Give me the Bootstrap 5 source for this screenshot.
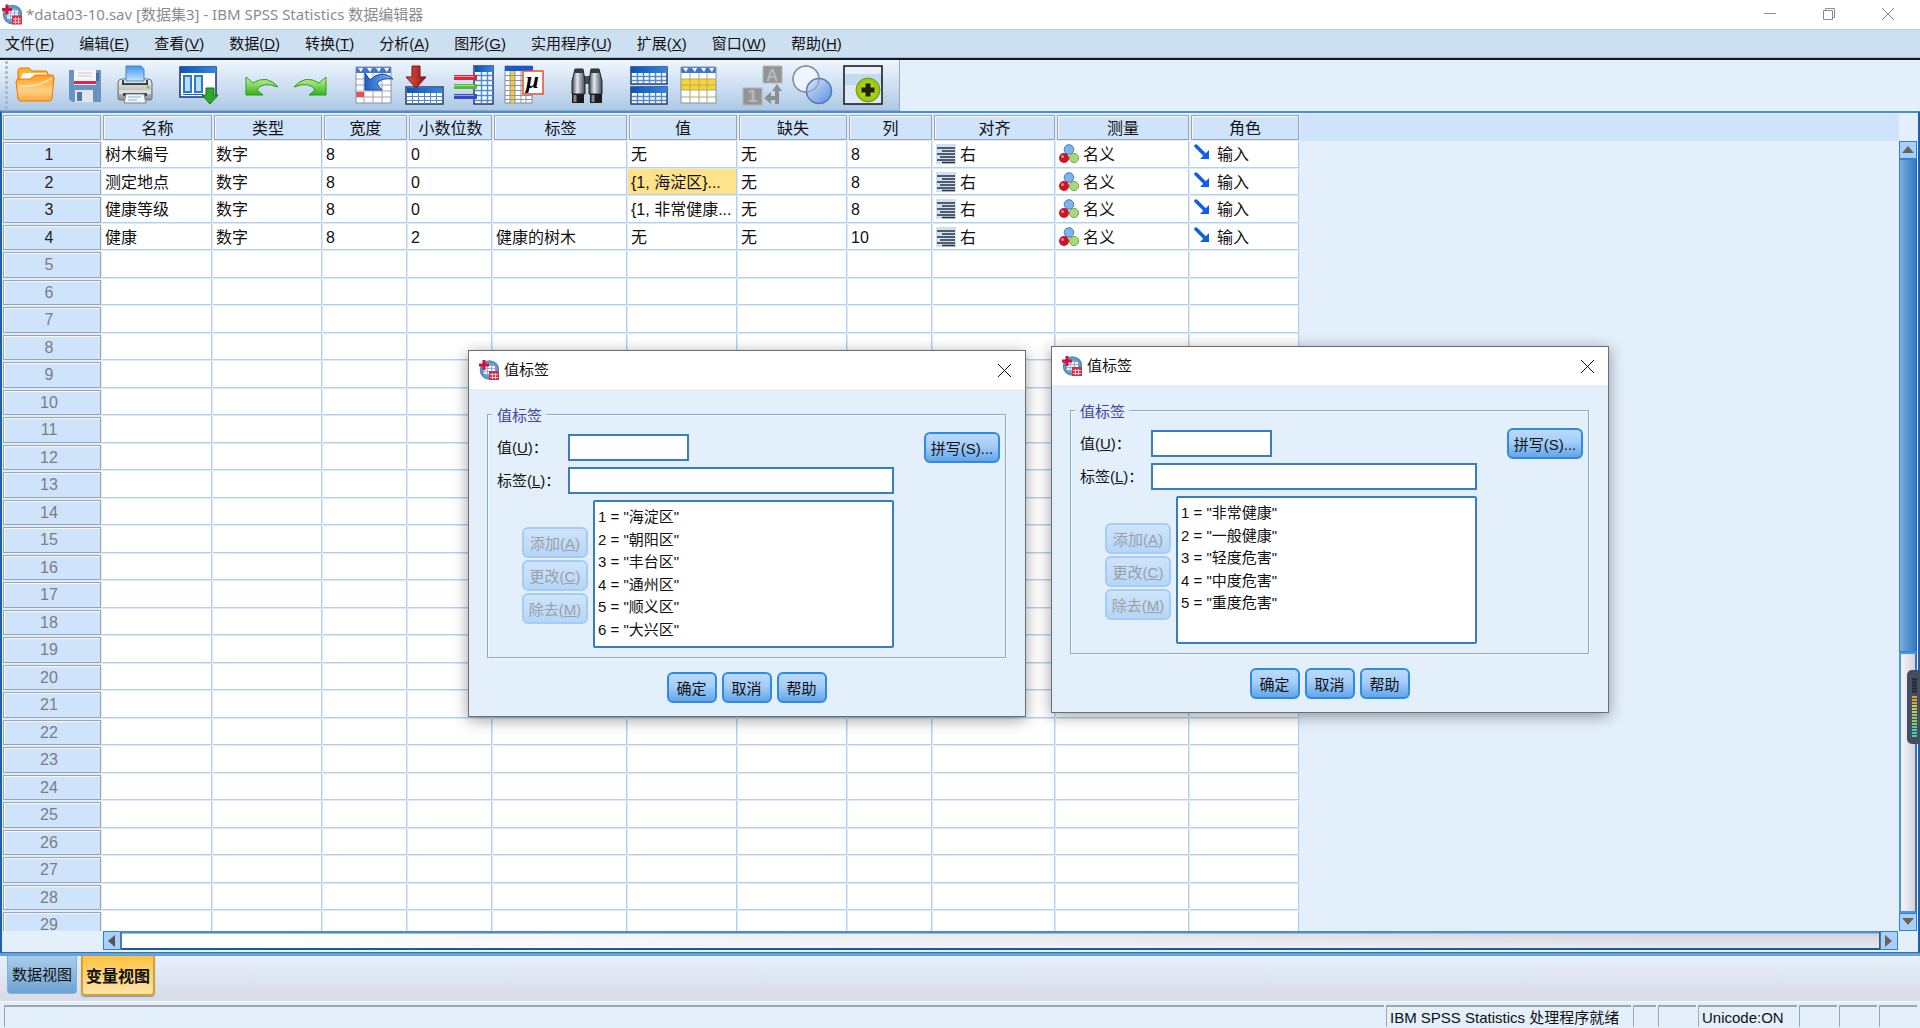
<!DOCTYPE html>
<html lang="zh-CN">
<head>
<meta charset="utf-8">
<meta name="viewport" content="width=device-width, initial-scale=1">
<title>*data03-10.sav [数据集3] - IBM SPSS Statistics 数据编辑器</title>
<link href="https://cdn.jsdelivr.net/npm/bootstrap@5.3.0/dist/css/bootstrap.min.css" rel="stylesheet">
<style>
:root { --pane:#e3effb; --head:#cfe3fb; --line:#b3d0ee; --line-soft:#dce9f7; }
body { font:16px/22px "Liberation Sans","Noto Sans CJK SC",sans-serif; color:#111; background:var(--pane); }
.title-bar { height:29px; background:#fff; color:#8c8c8c; font:15px/22px "Noto Sans","Noto Sans CJK SC",sans-serif; padding:0 3px 1px 2px; }
.win-btn { width:59px; height:29px; border:0; background:none; color:#8c8c8c; padding:0; display:flex; align-items:center; justify-content:center; }
.menu-bar { height:31px; background:#cde0f1; border-top:1px solid #b3cde3; border-bottom:2px solid #15181c; gap:25px; padding-left:5px; font-size:15px; box-shadow:inset 0 -1px #a9bdd0; }
.menu-bar a, .menu-bar a:hover { color:#111; text-decoration:none; }
.tool-wrap { height:51px; }
.tool-bar { width:900px; gap:10px; background:linear-gradient(#eef6fe,#cfe0f2 50%,#adc9e5); border-right:1px solid #9aa9b8; border-bottom:1px solid #9aa5b1; padding-left:4px; }
.grip { width:5px; height:50px; margin-right:-4px; background:radial-gradient(circle,#aab4bf 1px,transparent 2px) 0 0/5px 5px; }
.tool-bar button { width:40px; height:40px; padding:0; border:0; background:none; display:block; flex:none; }
.tool-bar svg { display:block; overflow:visible; }
.tool-bar .gap-before { margin-left:13px; }
.data-pane { border-top:2px solid #4a8fd6; border-left:2px solid #1a5fb0; border-right:2px solid #1a5fb0; border-bottom:1px solid #2a72ba; min-height:0; padding-top:1px; }
.grid-row { min-height:0; }
.grid-view { overflow:hidden; min-width:0; min-height:0; background:linear-gradient(var(--head),var(--head)) 0 0/100% 27px no-repeat; }
.var-grid { table-layout:fixed; width:1298px; border-collapse:separate; border-spacing:0; background:#fff; }
.var-grid th { font-weight:400; text-align:center; background:var(--head); padding:0; line-height:22px; border:1px solid #e2ecf7; box-shadow:inset 0 0 0 1px #98a3b3, inset 2px 2px #f4f9ff; }
.var-grid thead th { height:27px; padding-top:2px; }
.var-grid tbody th { color:#7a7d82; padding-right:6px; }
.var-grid tbody tr.used th { color:#222; }
.var-grid tbody tr { height:27px; }
.var-grid tbody tr:nth-child(odd) { height:28px; }
.var-grid td { padding:1px 0 0 3px; line-height:22px; white-space:nowrap; overflow:hidden; border-right:1px solid var(--line-soft); border-bottom:1px solid var(--line-soft); box-shadow:inset -1px -1px var(--line); }
.var-grid td.picked { background:#fee38b; }
.var-grid td svg { vertical-align:-4px; margin-right:4px; }
.v-bar { width:19px; padding-top:27px; }
.arrow { flex:none; border:1px solid #2a7fd8; background:#a9d0fb; padding:0; display:flex; align-items:center; justify-content:center; }
.v-bar .arrow { height:18px; width:18px; }
.v-thumb { height:493px; width:18px; border:1px solid #2f86dc; border-right-color:#1b63ae; background:linear-gradient(90deg,#78b0de,#2f78c4); }
.v-track { width:18px; border:2px solid #4c96dd; border-right-color:#4b6f9c; background:linear-gradient(90deg,#f6f6fa,#d3d2dd); }
.h-bar { height:20px; padding-left:101px; padding-right:20px; margin-bottom:1px; }
.h-bar .arrow { width:18px; height:19px; }
.h-track { height:19px; border:2px solid #3a8fe0; border-bottom-color:#1b5a9c; border-left:1px solid #777; border-right:1px solid #555; background:linear-gradient(90deg,#fff 5%,rgba(255,255,255,0) 90%),linear-gradient(#d3d2dd,#e8e8ee); box-shadow:inset 0 1px #b5b6bc; }
.tab-strip { height:48px; border-top:3px solid #6ba1d3; background:linear-gradient(#e5f0fc,#d9dae6); padding-left:7px; gap:4px; box-shadow:inset 0 1px #e9f3fd; }
.tab-strip button { border:1px solid #7fb0dc; border-top:0; border-radius:0 0 4px 4px; padding:1px 0 0; font-size:15px; width:70px; height:38px; background:linear-gradient(#a9cdea,#6ea3d4); color:#111; }
.tab-strip button.chosen { border:2px solid #d5a030; border-top:0; width:74px; height:40px; font-size:16px; font-weight:700; padding-top:4px; background:linear-gradient(#fdc340,#fee4a8); box-shadow:0 1px 1px #6ea3d4; }
.status-bar { height:27px; padding:3px 3px 0 4px; border-top:1px solid #f2f7fd; gap:2px; }
.status-bar div { border-top:2px solid #a2a5ab; border-left:1px solid #a2a5ab; height:22px; padding-left:3px; font-size:15px; line-height:22px; white-space:nowrap; }
.w-msg { width:245px; } .w-tiny { width:23px; } .w-slot { width:38px; } .w-code { width:99px; }
.value-dialog { position:absolute; width:558px; background:var(--pane); border:1px solid #6b6e72; box-shadow:0 3px 14px rgba(0,0,0,.38); font-size:15px; }
.dialog-one { left:468px; top:350px; }
.dialog-two { left:1051px; top:346px; }
.dialog-title { height:38px; background:#fff; padding-left:10px; gap:5px; }
.dialog-title .win-btn { width:42px; height:38px; color:#111; }
.value-dialog form { padding:13px 19px 13px 18px; }
.value-dialog fieldset { border:1px solid #86acd4; box-shadow:1px 1px #f6fafe, inset 1px 1px #f6fafe; height:256px; padding:6px 5px 0 9px; margin:0; }
.value-dialog legend { float:none; width:auto; font-size:15px; line-height:20px; padding:4px 4px 0 5px; margin:0 0 0 -5px; color:#3f44a0; background:var(--pane); }
.field-label { width:71px; line-height:22px; }
.value-dialog input { height:27px; border:2px solid #3a7cc2; background:#fff; padding:0 4px; }
.short-box { width:121px; } .long-box { width:326px; }
.list-row { margin-top:6px; }
.value-dialog select { width:301px; height:148px; border:2px solid #3a7cc2; background:#fff; padding:3px 0 0; font:15px/22px "Liberation Sans","Noto Sans CJK SC",sans-serif; overflow:hidden; color:#111; outline:0; }
.value-dialog option { padding:0 0 0 3px; height:22px; line-height:22px; min-height:0; }
.value-dialog option:nth-child(odd) { height:23px; }
.spss-btn { height:31px; border:2px solid #2e8be0; border-radius:6px; background:linear-gradient(#badafb,#a5cdf8 45%,#62a6ea); color:#111; font-size:15px; line-height:22px; padding:2px 0 0; width:50px; }
.spss-btn:disabled { color:#9a9fa6; border-color:#a5cdf3; background:linear-gradient(#cfe4fb,#b5d6f7); width:66px; }
.spss-btn.spell { width:76px; }
.side-btns { padding-top:27px; gap:2px; width:71px; margin-left:25px; }
.dialog-foot { gap:5px; padding-top:14px; }
.meter { position:absolute; right:0; top:670px; }
</style>
</head>
<body class="d-flex flex-column vh-100 overflow-hidden position-relative">
<svg width="0" height="0" class="position-absolute" aria-hidden="true">
  <defs>
    <linearGradient id="gTop"><stop stop-color="#0f52b5"/><stop offset="1" stop-color="#2f8ae0"/></linearGradient>
    <linearGradient id="gFold" x2="0" y2="1"><stop stop-color="#ff9a1c"/><stop offset=".6" stop-color="#ffd083"/><stop offset="1" stop-color="#ffa83a"/></linearGradient>
    <linearGradient id="gGreen" x2="0" y2="1"><stop stop-color="#d2f39a"/><stop offset="1" stop-color="#2fb41c"/></linearGradient>
    <linearGradient id="gRed" x2="1"><stop stop-color="#e8564a"/><stop offset="1" stop-color="#8e1410"/></linearGradient>
    <linearGradient id="gSteel"><stop stop-color="#3b4452"/><stop offset=".4" stop-color="#e4e9ef"/><stop offset="1" stop-color="#3f4856"/></linearGradient>
    <linearGradient id="gPrint" x2="0" y2="1"><stop stop-color="#f4f4f4"/><stop offset="1" stop-color="#8e9196"/></linearGradient>
    <linearGradient id="gSky" x2="0" y2="1"><stop stop-color="#3f97ee"/><stop offset="1" stop-color="#c6e4fd"/></linearGradient>
    <linearGradient id="gLens" x2="1" y2="1"><stop stop-color="#d6e6fd"/><stop offset="1" stop-color="#4b83e4"/></linearGradient>
    <linearGradient id="gSwoop" x2="1"><stop stop-color="#1c62c8"/><stop offset="1" stop-color="#7fb4ee"/></linearGradient>
    <radialGradient id="gLime"><stop stop-color="#d4ea1c"/><stop offset="1" stop-color="#8fc010"/></radialGradient>
    <radialGradient id="gGlobe" cx=".5" cy=".5"><stop stop-color="#b5d0ea"/><stop offset="1" stop-color="#4f86bb"/></radialGradient>
    <symbol id="logo" viewBox="0 0 20 20">
      <circle cx="10.500" cy="10" r="9.800" fill="url(#gGlobe)"/>
      <path d="M5 6h11v8H5z" fill="#f2f7fc"/><path d="M5 8.500h11M5 11.500h11M8.500 6v8M12.500 6v8" stroke="#8fb2d8"/>
      <path d="M3.500 0h3v3.500H10v3H6.500V10h-3V6.500H0v-3h3.500z" fill="#d2143c"/>
      <path d="M10 11h10v9H10z" fill="#d2304f"/><path d="M11 14.500h8M11 17.500h8M13.500 13v6M16.500 13v6" stroke="#ffc7cf"/>
    </symbol>
    <symbol id="align" viewBox="0 0 20 20"><path d="M0 0h20v20H0z" fill="#cfe0ef"/><path d="M1 4h18M6 7h13M1 10h18M4 13h15M1 16h18M6 18.500h13" stroke="#2a3140" stroke-width="1.500"/></symbol>
    <symbol id="nominal" viewBox="0 0 20 20"><circle cx="10" cy="5.500" r="4.800" fill="#7db4ec" stroke="#3c7fc6"/><circle cx="5" cy="14" r="5" fill="#cc1526"/><circle cx="3.500" cy="12.500" r="1.500" fill="#f08890"/><circle cx="15" cy="14" r="4.600" fill="#a9d87c" stroke="#6cab42"/></symbol>
    <symbol id="role" viewBox="0 0 20 20"><path d="M3 2l9 9" stroke="#0e5fe6" stroke-width="3.500" stroke-linecap="round"/><path d="M16 6v9H7z" fill="#0e5fe6"/></symbol>
  </defs>
</svg>

<header class="title-bar d-flex align-items-center flex-shrink-0">
  <svg width="20" height="21" class="me-1"><use href="#logo"/></svg>
  <span class="me-auto">*data03-10.sav [数据集3] - IBM SPSS Statistics 数据编辑器</span>
  <button class="win-btn" aria-label="最小化"><svg width="12" height="12" fill="none" stroke="currentColor"><path d="M0 5.500h12"/></svg></button>
  <button class="win-btn" aria-label="还原"><svg width="12" height="12" fill="none" stroke="currentColor"><path d="M.5 2.500h9v9h-9zM2.500 2.500v-2h9v9h-2"/></svg></button>
  <button class="win-btn" aria-label="关闭"><svg width="12" height="12" fill="none" stroke="currentColor"><path d="M0 0l12 12M12 0L0 12"/></svg></button>
</header>

<nav class="menu-bar d-flex align-items-center flex-shrink-0">
  <a href="#">文件(<u>F</u>)</a><a href="#">编辑(<u>E</u>)</a><a href="#">查看(<u>V</u>)</a><a href="#">数据(<u>D</u>)</a><a href="#">转换(<u>T</u>)</a><a href="#">分析(<u>A</u>)</a><a href="#">图形(<u>G</u>)</a><a href="#">实用程序(<u>U</u>)</a><a href="#">扩展(<u>X</u>)</a><a href="#">窗口(<u>W</u>)</a><a href="#">帮助(<u>H</u>)</a>
</nav>

<div class="tool-wrap flex-shrink-0">
<div class="tool-bar h-100 d-flex align-items-center">
  <span class="grip"></span>
  <button aria-label="打开"><svg width="40" height="40"><path d="M3 34V6q0-3 3-3h8l3 3h13q3 0 3 3v6z" fill="#ffb52e" stroke="#e07800"/><path d="M6 12l2-4h22l6 4v10H6z" fill="#fff"/><path d="M1 17q0-3 3-3h11l5-4h17q2 0 2 3l-2 20q0 3-3 3H6q-2 0-3-3z" fill="url(#gFold)" stroke="#e67c00"/><path d="M4 21q18 2 33-8" stroke="#ffe2a6" stroke-width="2" fill="none"/></svg></button>
  <button aria-label="保存"><svg width="40" height="40"><path d="M4 5h32v32H7l-3-3z" fill="#6a94bf"/><path d="M9 5h22v15H9z" fill="#f5f6f8"/><path d="M9 16h22v3H9z" fill="#dc2850"/><path d="M13 8h14M13 11h14" stroke="#c8ccd2"/><path d="M10 25h18v12H10z" fill="#e2e6ec"/><path d="M12 27h5v9h-5z" fill="#4f7aa8"/><path d="M31 8h3v8h-3z" fill="#456f9e"/></svg></button>
  <button aria-label="打印"><svg width="40" height="40"><path d="M3 18q0-4 4-4h26q4 0 4 4v15q0 2-2 2H5q-2 0-2-2z" fill="url(#gPrint)" stroke="#6d7075"/><path d="M11 1h15l3 3v12H11z" fill="url(#gSky)" stroke="#4a86c0"/><path d="M8 15v4h24v-4" fill="none" stroke="#3d4045" stroke-width="2"/><path d="M4 25h32v4H4z" fill="#dddee0"/><path d="M8 28h24v3H8z" fill="#3f4247"/><path d="M11 29h18l2 9H9z" fill="#f4f8fc" stroke="#7c8086"/><path d="M13 32h13M13 35h9" stroke="#76b1e8"/><circle cx="33" cy="22" r="1.500" fill="#59d23a"/></svg></button>
  <button class="gap-before" aria-label="对话框"><svg width="40" height="40"><path d="M2 2h36v30H2z" fill="#fff" stroke="#13336f" stroke-width="1.500"/><path d="M2 2h36v6H2z" fill="url(#gTop)"/><path d="M6 11h7v16H6zM17 11h7v16h-7z" fill="#b9dcfb" stroke="#2d79cc" stroke-width="2"/><path d="M5 29.500h20" stroke="#1b62c0"/><path d="M28 23h8v7h4l-8 9-8-9h4z" fill="#2fa82a" stroke="#16721a"/></svg></button>
  <button class="gap-before" aria-label="撤销"><svg width="40" height="40"><path d="M5 12v18h17l-6-5q5-9 21-3Q26 9 12 18z" fill="url(#gGreen)" stroke="#2b9d1d"/></svg></button>
  <button aria-label="重做"><svg width="40" height="40"><path d="M35 12v18H18l6-5q-5-9-21-3Q14 9 28 18z" fill="url(#gGreen)" stroke="#2b9d1d"/></svg></button>
  <button class="gap-before" aria-label="转到个案"><svg width="40" height="40"><path d="M2 2h35v36H2z" fill="#fff"/><path d="M2 2h35v6H2z" fill="#3f76d2"/><path d="M4 3h5l-2 4zM13 3h5l-2 4zM22 3h5l-2 4zM30 3h5l-2 4z" fill="#fff"/><path d="M2 14h35M2 20h35M2 26h35M2 32h35M10 8v30M19 8v30M28 8v30" stroke="#9fa5b8"/><path d="M2 27h8v5H2z" fill="#ee4b54"/><path d="M2 2h35v36H2z" fill="none" stroke="#8991a8"/><path d="M11 8v17h17l-5-6q4-7 16-5Q31 6 21 11l-5 4z" fill="url(#gSwoop)" stroke="#174a9c"/></svg></button>
  <button aria-label="转到变量"><svg width="40" height="40"><path d="M2 22h37v17H2z" fill="#fff" stroke="#233a78" stroke-width="1.500"/><path d="M3 23h35v5H3z" fill="url(#gTop)"/><path d="M3 31.500h35M3 35.500h35M8.500 28v11M14.500 28v11M20.500 28v11M26.500 28v11M32.500 28v11" stroke="#4c8ada"/><path d="M8 1h8v11h6L12 23 2 12h6z" fill="url(#gRed)" stroke="#7d100e"/></svg></button>
  <button aria-label="变量"><svg width="40" height="40"><path d="M20 1h19v38H20z" fill="#fff" stroke="#233a78" stroke-width="1.500"/><path d="M21 1h18v6H21z" fill="url(#gTop)"/><path d="M21 10.500h18M21 15.500h18M21 20.500h18M21 25.500h18M21 30.500h18M21 35.500h18M27.500 7v31M33.500 7v31" stroke="#4c8ada" stroke-width="1.500"/><path d="M0 10h23v5H0z" fill="#d22a40"/><path d="M0 19h23v5H0z" fill="#57bb32"/><path d="M0 29h23v5H0z" fill="#3849c8"/><path d="M0 11.500h20M0 20.500h20M0 30.500h20" stroke="#fff" stroke-opacity=".5"/></svg></button>
  <button aria-label="描述统计"><svg width="40" height="40"><path d="M1 1h27v37H1z" fill="#fff" stroke="#8088a0"/><path d="M1 1h28v5H1z" fill="#1759cf"/><path d="M6 6h5v32H6z" fill="#f4cb45"/><path d="M1 10.500h27M1 15.500h27M1 20.500h27M1 25.500h27M1 30.500h27M1 34.500h27M6 6v32M11 6v32M17 6v32M22 6v32" stroke="#8c93a4"/><path d="M19 6h20v23H19z" fill="#fff" stroke="#e4512c" stroke-width="1.500"/><text x="22" y="23" font-family="Liberation Serif" font-style="italic" font-weight="700" font-size="23">μ</text></svg></button>
  <button class="gap-before" aria-label="查找"><svg width="40" height="40"><path d="M15 11h11v8H15z" fill="#4b4f5c"/><path d="M8 4h8l2 12v13H5V16z" fill="url(#gSteel)" stroke="#222"/><path d="M24 4h8l3 12v13H22V16z" fill="url(#gSteel)" stroke="#222"/><path d="M5 29h12v9H5zM23 29h12v9H23z" fill="#191b1f"/><path d="M8 30v7M26 30v7" stroke="#888" stroke-width="3"/><path d="M8 4h8v4H8zM24 4h8v4h-8z" fill="#353941"/></svg></button>
  <button class="gap-before" aria-label="拆分文件"><svg width="40" height="40"><path d="M1 2h36v17H1zM1 22h36v17H1z" fill="#fff" stroke="#233a78" stroke-width="1.500"/><path d="M1 2h36v6H1zM1 22h36v6H1z" fill="url(#gTop)"/><path d="M2 11.500h34M2 15.500h34M2 31.500h34M2 35.500h34M7.500 8v10M13.500 8v10M19.500 8v10M25.500 8v10M31.500 8v10M7.500 28v10M13.500 28v10M19.500 28v10M25.500 28v10M31.500 28v10" stroke="#4c8ada" stroke-width="1.500"/></svg></button>
  <button aria-label="选择个案"><svg width="40" height="40"><path d="M1 2h35v36H1z" fill="#fff"/><path d="M1 2h35v6H1z" fill="#3f76d2"/><path d="M3 3h5l-2 4zM12 3h5l-2 4zM21 3h5l-2 4zM29 3h5l-2 4z" fill="#fff"/><path d="M1 14h35v11H1z" fill="#fad52c"/><path d="M1 14h35M1 20h35M1 25h35M1 32h35M10 8v30M19 8v30M27 8v30" stroke="#b0a878"/><path d="M1 2h35v36H1z" fill="none" stroke="#8991a8"/></svg></button>
  <button class="gap-before" aria-label="值标签"><svg width="40" height="40"><path d="M20 1h19v17H20zM0 23h19v17H0z" fill="#929496" stroke="#b4b6b8"/><text x="23" y="16" font-family="Liberation Sans" font-weight="700" font-size="17" fill="#b6b8ba">A</text><text x="4" y="37" font-family="DejaVu Sans" font-weight="700" font-size="16" fill="#b6b8ba">1</text><path d="M34 19l5 7h-3v13h-4v-4h-4v4l-7-6 7-6v4h4v-5h-3z" fill="#8c8f92"/></svg></button>
  <button aria-label="使用变量集"><svg width="40" height="40"><circle cx="13" cy="14" r="13" fill="#f3f7fc" fill-opacity=".8" stroke="#7c8490" stroke-width="1.500"/><circle cx="26" cy="26" r="12.500" fill="url(#gLens)" fill-opacity=".85" stroke="#5877a8" stroke-width="1.500"/><circle cx="13" cy="14" r="13" fill="none" stroke="#8e97a4"/></svg></button>
  <button aria-label="自定义"><svg width="40" height="40"><path d="M0 1h40v38H0z" fill="#dceafa"/><path d="M1 1h38v19H1z" fill="#c3daf1"/><path d="M1 1h38v8H1z" fill="#e8f1fb"/><path d="M1 1h38v38H1z" fill="none" stroke="#111" stroke-width="1.500"/><circle cx="25" cy="25" r="12" fill="url(#gLime)" stroke="#6f9c10"/><path d="M22.500 18.500h5v4h4v5h-4v4h-5v-4h-4v-5h4z" fill="#1c2110"/></svg></button>
</div>
</div>

<main class="data-pane d-flex flex-column flex-fill">
  <div class="grid-row d-flex flex-fill">
    <div class="grid-view flex-fill">
      <table class="var-grid">
        <colgroup><col style="width:100px"><col style="width:111px"><col style="width:110px"><col style="width:85px"><col style="width:85px"><col style="width:135px"><col style="width:110px"><col style="width:110px"><col style="width:85px"><col style="width:123px"><col style="width:134px"><col style="width:110px"></colgroup>
        <thead><tr><th></th><th>名称</th><th>类型</th><th>宽度</th><th>小数位数</th><th>标签</th><th>值</th><th>缺失</th><th>列</th><th>对齐</th><th>测量</th><th>角色</th></tr></thead>
        <tbody id="varRows"></tbody>
      </table>
    </div>
    <div class="v-bar d-flex flex-column flex-shrink-0">
      <button class="arrow" aria-label="向上滚动"><svg width="12" height="8"><path d="M6 0l6 7H0z" fill="#6b6355"/></svg></button>
      <div class="v-thumb flex-shrink-0"></div>
      <div class="v-track flex-fill"></div>
      <button class="arrow" aria-label="向下滚动"><svg width="12" height="8"><path d="M6 7l6-7H0z" fill="#6b6355"/></svg></button>
    </div>
  </div>
  <div class="h-bar d-flex flex-shrink-0">
    <button class="arrow" aria-label="向左滚动"><svg width="8" height="12"><path d="M0 6l7-6v12z" fill="#555"/></svg></button>
    <div class="h-track flex-fill"></div>
    <button class="arrow" aria-label="向右滚动"><svg width="8" height="12"><path d="M7 6L0 0v12z" fill="#6b6355"/></svg></button>
  </div>
</main>

<div class="tab-strip d-flex align-items-start flex-shrink-0"><button>数据视图</button><button class="chosen">变量视图</button></div>

<footer class="status-bar d-flex flex-shrink-0">
  <div class="flex-fill"></div><div class="w-msg">IBM SPSS Statistics 处理程序就绪</div><div class="w-tiny"></div><div class="w-slot"></div><div class="w-code">Unicode:ON</div><div class="w-slot"></div><div class="w-slot"></div><div class="w-slot"></div>
</footer>

<section class="value-dialog dialog-one" role="dialog" aria-label="值标签">
  <div class="dialog-title d-flex align-items-center"><svg width="20" height="20"><use href="#logo"/></svg><span class="me-auto">值标签</span><button class="win-btn" aria-label="关闭"><svg width="13" height="13" fill="none" stroke="currentColor"><path d="M0 0l13 13M13 0L0 13"/></svg></button></div>
  <form>
    <fieldset>
      <legend>值标签</legend>
      <div class="d-flex align-items-center"><label class="field-label" for="valA">值(<u>U</u>)：</label><input class="short-box" id="valA"><button type="button" class="spss-btn spell ms-auto">拼写(S)...</button></div>
      <div class="d-flex align-items-center mt-1"><label class="field-label" for="labA">标签(<u>L</u>)：</label><input class="long-box" id="labA"></div>
      <div class="list-row d-flex">
        <div class="side-btns d-flex flex-column"><button type="button" class="spss-btn" disabled>添加(<u>A</u>)</button><button type="button" class="spss-btn" disabled>更改(<u>C</u>)</button><button type="button" class="spss-btn" disabled>除去(<u>M</u>)</button></div>
        <select size="6" aria-label="值标签列表"><option>1 = "海淀区"</option><option>2 = "朝阳区"</option><option>3 = "丰台区"</option><option>4 = "通州区"</option><option>5 = "顺义区"</option><option>6 = "大兴区"</option></select>
      </div>
    </fieldset>
    <div class="dialog-foot d-flex justify-content-center"><button type="button" class="spss-btn">确定</button><button type="button" class="spss-btn">取消</button><button type="button" class="spss-btn">帮助</button></div>
  </form>
</section>

<section class="value-dialog dialog-two" role="dialog" aria-label="值标签">
  <div class="dialog-title d-flex align-items-center"><svg width="20" height="20"><use href="#logo"/></svg><span class="me-auto">值标签</span><button class="win-btn" aria-label="关闭"><svg width="13" height="13" fill="none" stroke="currentColor"><path d="M0 0l13 13M13 0L0 13"/></svg></button></div>
  <form>
    <fieldset>
      <legend>值标签</legend>
      <div class="d-flex align-items-center"><label class="field-label" for="valB">值(<u>U</u>)：</label><input class="short-box" id="valB"><button type="button" class="spss-btn spell ms-auto">拼写(S)...</button></div>
      <div class="d-flex align-items-center mt-1"><label class="field-label" for="labB">标签(<u>L</u>)：</label><input class="long-box" id="labB"></div>
      <div class="list-row d-flex">
        <div class="side-btns d-flex flex-column"><button type="button" class="spss-btn" disabled>添加(<u>A</u>)</button><button type="button" class="spss-btn" disabled>更改(<u>C</u>)</button><button type="button" class="spss-btn" disabled>除去(<u>M</u>)</button></div>
        <select size="6" aria-label="值标签列表"><option>1 = "非常健康"</option><option>2 = "一般健康"</option><option>3 = "轻度危害"</option><option>4 = "中度危害"</option><option>5 = "重度危害"</option></select>
      </div>
    </fieldset>
    <div class="dialog-foot d-flex justify-content-center"><button type="button" class="spss-btn">确定</button><button type="button" class="spss-btn">取消</button><button type="button" class="spss-btn">帮助</button></div>
  </form>
</section>

<svg class="meter" width="13" height="74" aria-hidden="true"><rect width="20" height="74" rx="5" fill="#454d60"/><path d="M5 9.500h5M5 12.500h5M5 15.500h5M5 18.500h5M5 21.500h5" stroke="#23262e" stroke-width="2"/><path d="M5 27h5M5 30h5M5 33h5" stroke="#d8a23a" stroke-width="2"/><path d="M5 36h5M5 39h5M5 42h5" stroke="#c8cf45" stroke-width="2"/><path d="M5 45h5M5 48h5M5 51h5M5 54h5" stroke="#8fcf62" stroke-width="2"/><path d="M5 57h5M5 60h5M5 63h5M5 66h5" stroke="#40cdb0" stroke-width="2"/></svg>

<script>
const icon = (id, text) => `<svg width="20" height="20"><use href="#${id}"/></svg>${text}`;
const vars = [
  ["树木编号","数字","8","0","","无","无","8"],
  ["测定地点","数字","8","0","","{1, 海淀区}...","无","8"],
  ["健康等级","数字","8","0","","{1, 非常健康...","无","8"],
  ["健康","数字","8","2","健康的树木","无","无","10"]
];
let html = "";
for (let i = 0; i < 29; i++) {
  const v = vars[i];
  const cells = v ? [...v, icon("align","右"), icon("nominal","名义"), icon("role","输入")] : Array(11).fill("");
  html += `<tr${v ? ' class="used"' : ""}><th scope="row">${i + 1}</th>` +
    cells.map((c, k) => `<td${i === 1 && k === 5 ? ' class="picked"' : ""}>${c}</td>`).join("") + "</tr>";
}
document.getElementById("varRows").innerHTML = html;
</script>
<script src="https://cdn.jsdelivr.net/npm/bootstrap@5.3.0/dist/js/bootstrap.bundle.min.js"></script>
</body>
</html>
